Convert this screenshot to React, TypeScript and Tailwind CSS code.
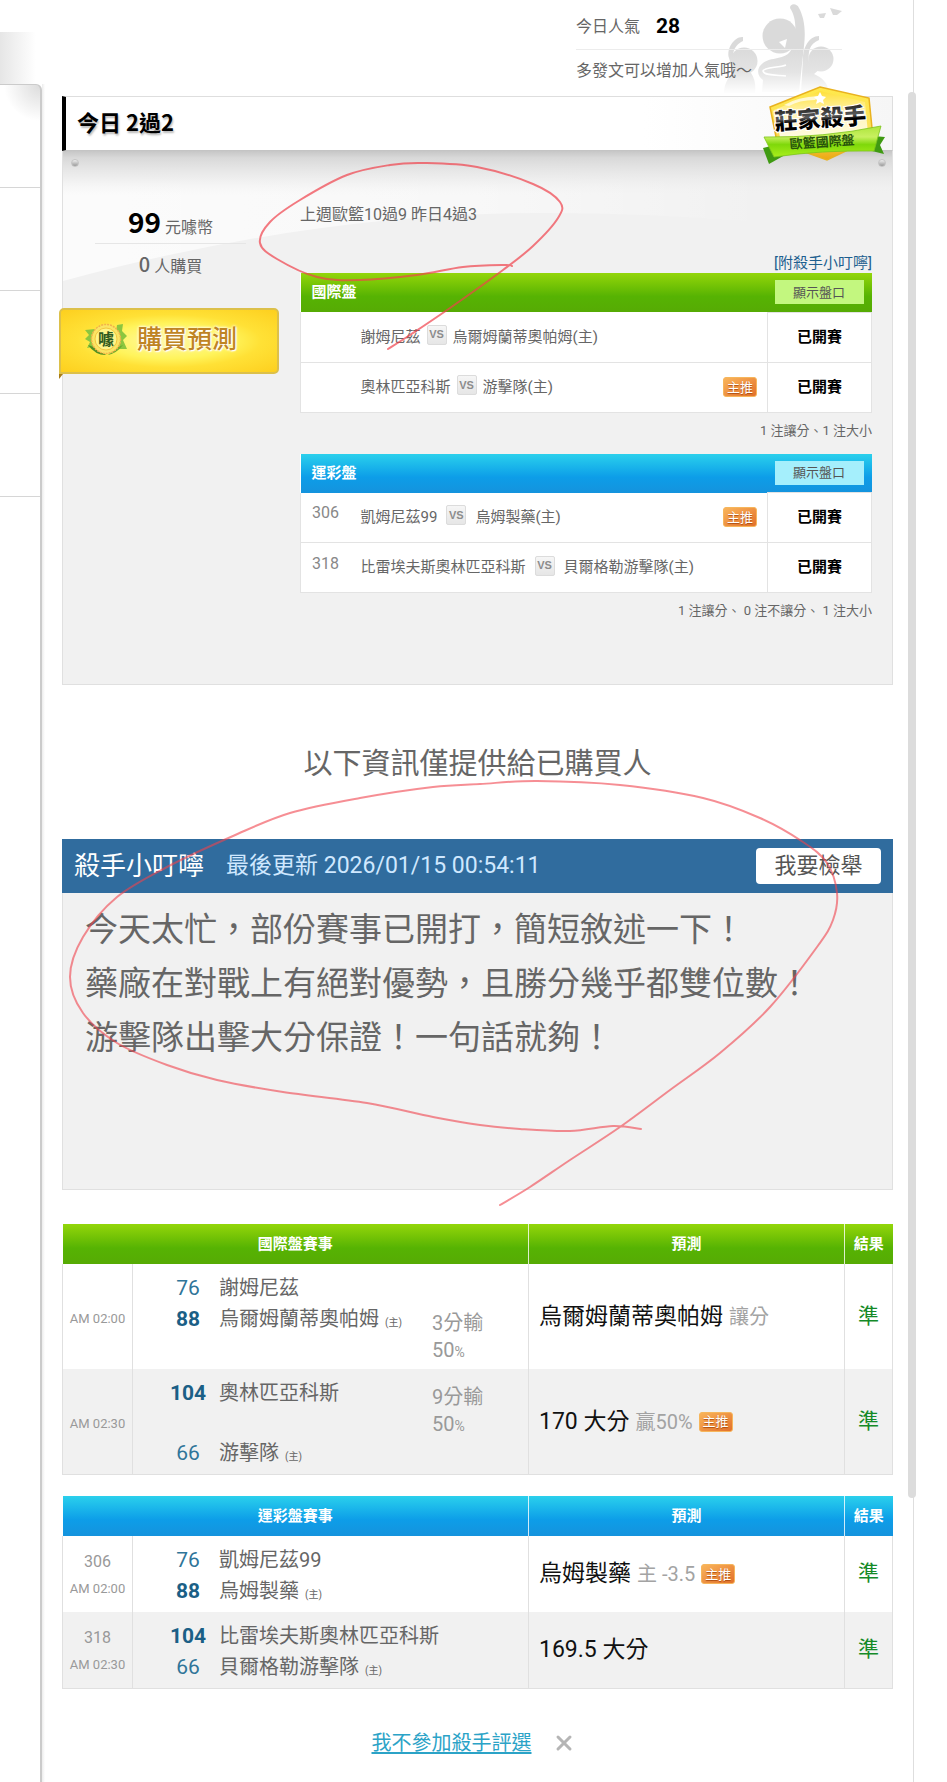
import clsx from "clsx";
import { X } from "lucide-react";

type Tone = "green" | "blue";
type Point = [number, number];

const toneHeader: Record<Tone, string> = {
  green: "bg-linear-to-b from-[#93d60a] via-[#56b303] via-60% to-[#56ab04]",
  blue: "bg-linear-to-b from-[#2bd0ec] via-[#0d9de8] via-60% to-[#1493dd]",
};

const toneButton: Record<Tone, string> = {
  green: "bg-[#c3f77f]",
  blue: "bg-[#a5effc]",
};

const betTables = [
  {
    title: "國際盤",
    tone: "green" as Tone,
    note: "1 注讓分、1 注大小",
    rows: [
      { no: "", away: "謝姆尼茲", home: "烏爾姆蘭蒂奧帕姆(主)", main: false },
      { no: "", away: "奧林匹亞科斯", home: "游擊隊(主)", main: true },
    ],
  },
  {
    title: "運彩盤",
    tone: "blue" as Tone,
    note: "1 注讓分、 0 注不讓分、 1 注大小",
    rows: [
      { no: "306", away: "凱姆尼茲99", home: "烏姆製藥(主)", main: true },
      {
        no: "318",
        away: "比雷埃夫斯奧林匹亞科斯",
        home: "貝爾格勒游擊隊(主)",
        main: false,
      },
    ],
  },
];

const resultTables = [
  {
    title: "國際盤賽事",
    tone: "green" as Tone,
    rows: [
      {
        no: "",
        time: "AM 02:00",
        teams: [
          { score: 76, name: "謝姆尼茲", home: false, win: false, spread: "" },
          { score: 88, name: "烏爾姆蘭蒂奧帕姆", home: true, win: true, spread: "3分輸" },
        ],
        pick: "烏爾姆蘭蒂奧帕姆",
        detail: "讓分",
        main: false,
      },
      {
        no: "",
        time: "AM 02:30",
        teams: [
          { score: 104, name: "奧林匹亞科斯", home: false, win: true, spread: "9分輸" },
          { score: 66, name: "游擊隊", home: true, win: false, spread: "" },
        ],
        pick: "170 大分",
        detail: "贏50%",
        main: true,
      },
    ],
  },
  {
    title: "運彩盤賽事",
    tone: "blue" as Tone,
    rows: [
      {
        no: "306",
        time: "AM 02:00",
        teams: [
          { score: 76, name: "凱姆尼茲99", home: false, win: false, spread: "" },
          { score: 88, name: "烏姆製藥", home: true, win: true, spread: "" },
        ],
        pick: "烏姆製藥",
        detail: "主 -3.5",
        main: true,
      },
      {
        no: "318",
        time: "AM 02:30",
        teams: [
          { score: 104, name: "比雷埃夫斯奧林匹亞科斯", home: false, win: true, spread: "" },
          { score: 66, name: "貝爾格勒游擊隊", home: true, win: false, spread: "" },
        ],
        pick: "169.5 大分",
        detail: "",
        main: false,
      },
    ],
  },
];

const smallLoop: Point[] = [
  [512, 266], [505, 265], [463, 267], [417, 275], [360, 280], [317, 277],
  [277, 259], [260, 243], [270, 222], [300, 200], [347, 175], [390, 165],
  [423, 163], [477, 167], [533, 184], [560, 202], [558, 218], [533, 246],
  [503, 270], [450, 308], [410, 335], [388, 349],
];

const largeLoop: Point[] = [
  [641, 1129], [613, 1126], [570, 1131], [520, 1129], [480, 1125], [433, 1117],
  [367, 1103], [283, 1092], [217, 1080], [167, 1065], [117, 1043], [83, 1013],
  [70, 977], [83, 937], [117, 897], [167, 867], [233, 836], [290, 813],
  [360, 798], [433, 787], [480, 784], [537, 781], [620, 785], [703, 798],
  [760, 818], [803, 842], [827, 863], [837, 893], [833, 920], [817, 947],
  [770, 1007], [720, 1053], [670, 1090], [620, 1127], [570, 1160], [530, 1187],
  [500, 1205],
];

// Catmull-Rom spline through the points
function smoothPath(points: Point[]) {
  let d = `M${points[0][0]} ${points[0][1]}`;
  for (let i = 0; i < points.length - 1; i++) {
    const p0 = points[i - 1] ?? points[i];
    const p1 = points[i];
    const p2 = points[i + 1];
    const p3 = points[i + 2] ?? p2;
    d += ` C${p1[0] + (p2[0] - p0[0]) / 6} ${p1[1] + (p2[1] - p0[1]) / 6}`;
    d += ` ${p2[0] - (p3[0] - p1[0]) / 6} ${p2[1] - (p3[1] - p1[1]) / 6}`;
    d += ` ${p2[0]} ${p2[1]}`;
  }
  return d;
}

function MarkerLoops() {
  return (
    <svg
      className="pointer-events-none absolute left-0 top-0 z-20"
      width="947"
      height="1300"
      fill="none"
      stroke="#f0424c"
      strokeLinecap="round"
      aria-hidden="true"
    >
      <path d={smoothPath(smallLoop)} strokeWidth="2" strokeOpacity="0.7" />
      <path d={smoothPath(largeLoop)} strokeWidth="2" strokeOpacity="0.6" />
    </svg>
  );
}

function MainPick() {
  return (
    <span className="inline-flex h-5 w-[34px] shrink-0 items-center justify-center rounded-[3px] border border-[#f6b65c] bg-linear-to-br from-[#f9b45a] to-[#e2702a] text-[13px] leading-none text-white [text-shadow:0_1px_1px_#a84a10]">
      主推
    </span>
  );
}

function Versus({ wide }: { wide: boolean }) {
  return (
    <span
      className={clsx(
        "mb-1 inline-flex h-5 w-5 items-center justify-center rounded-[2px] border border-[#dcdcdc] bg-linear-to-b from-[#f6f6f6] to-[#e6e6e6] font-['Liberation_Sans'] text-[11px] font-bold leading-none text-[#8c8c8c]",
        wide ? "mx-[9px]" : "mx-1.5"
      )}
    >
      VS
    </span>
  );
}

function Crowd() {
  return (
    <svg
      className="absolute right-[49px] top-0"
      width="124"
      height="96"
      viewBox="720 0 124 96"
      aria-hidden="true"
    >
      <defs>
        <linearGradient id="crowdFade" x1="0" y1="0" x2="0" y2="96" gradientUnits="userSpaceOnUse">
          <stop offset="0.5" stopColor="#dadada" />
          <stop offset="0.75" stopColor="#e4e4e4" />
          <stop offset="0.96" stopColor="#fdfdfd" />
        </linearGradient>
      </defs>
      <g fill="url(#crowdFade)">
        <circle cx="780" cy="36" r="17.5" />
        <path d="M790 8C790 3 797 3 799 8C804 17 806 30 804 46L799 92H762L763 80C757 76 756 68 763 63C770 57 786 60 791 50C796 38 798 20 790 8Z" />
        <circle cx="744" cy="61" r="13.5" />
        <path d="M743 37C735 36 726 48 729 58L733 72C727 78 724 86 724 93H755C756 86 755 79 751 73L735 68C731 58 732 46 743 41Z" />
        <circle cx="821" cy="59" r="12.5" />
        <path d="M819 36C809 36 803 48 803 58L801 93H829C828 82 822 78 814 74L820 69L809 62C808 52 809 44 819 40Z" />
        <path d="M818 14L826 13L824 18L820 18ZM830 8L842 11L837 15L833 15Z" />
      </g>
      <path d="M779 42L787 39L785 48Z" fill="#fff" />
      <path
        d="M786 65C779 68 764 67 763 71C764 76 778 75 786 76"
        fill="none"
        stroke="#fff"
        strokeWidth="1.5"
      />
    </svg>
  );
}

function KillerBadge() {
  return (
    <svg
      className="absolute right-1.5 top-[-12px] z-10"
      width="126"
      height="82"
      viewBox="762 84 126 82"
      role="img"
      aria-label="莊家殺手 歐籃國際盤"
    >
      <defs>
        <linearGradient id="gold" x1="0" y1="0" x2="0" y2="1">
          <stop offset="0" stopColor="#ffe94a" />
          <stop offset="0.6" stopColor="#fbe05c" />
          <stop offset="1" stopColor="#eda712" />
        </linearGradient>
        <linearGradient id="inner" x1="0" y1="0" x2="0" y2="1">
          <stop offset="0" stopColor="#ffe03a" />
          <stop offset="0.5" stopColor="#fff5b8" />
          <stop offset="1" stopColor="#fffbe0" />
        </linearGradient>
        <linearGradient id="ribbon" x1="0" y1="0" x2="0" y2="1">
          <stop offset="0" stopColor="#aee53c" />
          <stop offset="0.35" stopColor="#c8f060" />
          <stop offset="0.6" stopColor="#7fd80a" />
          <stop offset="1" stopColor="#a9ef1c" />
        </linearGradient>
        <linearGradient id="ink" x1="0" y1="0" x2="0" y2="1">
          <stop offset="0" stopColor="#000" />
          <stop offset="0.5" stopColor="#5a5a5a" />
          <stop offset="0.62" stopColor="#000" />
        </linearGradient>
      </defs>
      <path d="M764 148L770 164L786 155L772 146Z" fill="#3f9a12" />
      <path d="M874 136L886 137L881 145L885 154L873 151Z" fill="#3f9a12" />
      <path
        d="M821 87L870 98L874 138L828 160L778 142L771 107Z"
        fill="url(#gold)"
        stroke="#e9b21f"
        strokeWidth="1.5"
      />
      <path d="M821 91L866 102L869 134L781 137L775 110Z" fill="url(#inner)" />
      <path d="M785 105Q798 97 820 96L816 100Q800 100 790 106Z" fill="#fff" fillOpacity="0.7" />
      <path d="M821 92L823 96L827 97L824 100L825 104L821 102L817 104L818 100L815 97L819 96Z" fill="#fff" />
      <path
        d="M765 137Q824 138 882 126L875 151Q822 150 775 157Z"
        fill="url(#ribbon)"
        stroke="#7cc41c"
        strokeWidth="0.8"
      />
      <text
        x="776"
        y="130"
        transform="rotate(-4 776 130)"
        className="font-['Noto_Sans_CJK_TC'] text-[23px] font-black"
        fill="url(#ink)"
        stroke="#fff"
        strokeWidth="2"
        paintOrder="stroke"
      >
        莊家殺手
      </text>
      <text
        x="791"
        y="149"
        transform="rotate(-4 791 149)"
        className="font-['Noto_Sans_CJK_TC'] text-[13px] font-bold"
        fill="#28540b"
      >
        歐籃國際盤
      </text>
    </svg>
  );
}

function CoinLogo() {
  return (
    <svg width="46" height="36" viewBox="0 0 46 36" aria-hidden="true">
      <path d="M2 9L12 8L13 30L9 26L4 27L7 21L2 18L6 14Z" fill="#8cc63f" />
      <path d="M34 4L40 3L39 10L44 15L40 19L44 28L36 28L30 32Z" fill="#8cc63f" />
      <path d="M5 24Q12 34 23 34L16 28Z" fill="#4f8f22" />
      <path d="M40 24Q34 32 25 34L32 27Z" fill="#6cab2e" />
      <circle cx="23" cy="18" r="14.5" fill="#fbe463" stroke="#f3b24a" strokeWidth="1.5" strokeDasharray="2 1" />
      <circle cx="23" cy="18" r="11" fill="#fdf48a" stroke="#f2c63c" />
      <text
        x="15"
        y="24"
        className="font-['Noto_Sans_CJK_TC'] text-[16px] font-bold"
        fill="#2f5a20"
      >
        噱
      </text>
    </svg>
  );
}

function PanelShine() {
  return (
    <svg
      className="absolute inset-x-0 top-0 h-[190px] w-full"
      viewBox="0 0 831 190"
      preserveAspectRatio="none"
      aria-hidden="true"
    >
      <defs>
        <linearGradient id="shine" x1="0" y1="0" x2="1" y2="0">
          <stop offset="0" stopColor="#fff" stopOpacity="0.75" />
          <stop offset="0.5" stopColor="#fff" stopOpacity="0.5" />
          <stop offset="0.85" stopColor="#fff" stopOpacity="0" />
        </linearGradient>
        <linearGradient id="shade" x1="0" y1="0" x2="0" y2="1">
          <stop offset="0" stopColor="#c6c6c6" />
          <stop offset="0.15" stopColor="#d8d8d8" />
          <stop offset="0.6" stopColor="#e8e8e8" stopOpacity="0.7" />
          <stop offset="1" stopColor="#f1f1f1" stopOpacity="0" />
        </linearGradient>
      </defs>
      <path d="M0 0H831V85Q650 62 480 62Q250 62 0 130Z" fill="url(#shine)" />
      <rect width="831" height="44" fill="url(#shade)" />
    </svg>
  );
}

function Screw() {
  return (
    <span className="h-2 w-2 rounded-full border border-[#c4c4c4] bg-linear-to-b from-[#f0f0f0] to-[#9a9a9a]" />
  );
}

function BetTable({ table }: { table: (typeof betTables)[number] }) {
  return (
    <div>
      <table className="w-full border-collapse bg-white text-[15px] text-[#666]">
        <thead>
          <tr className={toneHeader[table.tone]}>
            <th colSpan={2} className="h-[39px] pl-[11px] text-left font-bold text-white">
              {table.title}
            </th>
            <th className="w-[104px] pr-2">
              <button
                type="button"
                className={clsx(
                  "ml-auto block h-6 w-[89px] text-[13px] font-normal text-[#555]",
                  toneButton[table.tone]
                )}
              >
                顯示盤口
              </button>
            </th>
          </tr>
        </thead>
        <tbody>
          {table.rows.map((row) => (
            <tr key={row.away}>
              <td className="h-[50px] w-[60px] border-b border-l border-[#e3e3e3] pb-2 pl-[11px] text-[16px] text-[#888]">
                {row.no}
              </td>
              <td className="border-b border-[#e3e3e3] pr-[10px]">
                <div className="flex items-center justify-between">
                  <span className="flex items-center">
                    {row.away}
                    <Versus wide={row.no !== ""} />
                    {row.home}
                  </span>
                  {row.main && <MainPick />}
                </div>
              </td>
              <td className="border border-[#e3e3e3] text-center font-bold text-black">
                已開賽
              </td>
            </tr>
          ))}
        </tbody>
      </table>
      <div className="pt-2 text-right text-[13px] leading-5 text-[#666]">{table.note}</div>
    </div>
  );
}

function ResultTable({ table }: { table: (typeof resultTables)[number] }) {
  return (
    <table className="w-full table-fixed border-collapse">
      <colgroup>
        <col className="w-[70px]" />
        <col />
        <col className="w-[316px]" />
        <col className="w-12" />
      </colgroup>
      <thead>
        <tr className={clsx("text-[15px] font-bold text-white", toneHeader[table.tone])}>
          <th colSpan={2} className="h-10 border-r border-white/80">
            {table.title}
          </th>
          <th className="border-r border-white/80">預測</th>
          <th>結果</th>
        </tr>
      </thead>
      <tbody>
        {table.rows.map((row) => (
          <tr
            key={row.time}
            className="border-x border-[#e0e0e0] last:border-b even:bg-[#f1f1f1]"
          >
            <td className="border-r border-[#e0e0e0] text-center text-[13px] text-[#999]">
              {row.no && <div className="text-[16px] leading-[26px]">{row.no}</div>}
              <div className="pt-1 leading-5">{row.time}</div>
            </td>
            <td className="border-r border-[#e0e0e0] pb-[5px] pt-[9px]">
              {row.teams.map((team) => (
                <div key={team.name} className="flex items-start text-xl leading-[31px]">
                  <div
                    className={clsx(
                      "ml-[27px] w-14 text-center text-[21px]",
                      team.win ? "font-bold text-[#1b5f86]" : "text-[#2f7599]"
                    )}
                  >
                    {team.score}
                  </div>
                  <div
                    className={clsx(
                      "ml-[3px] whitespace-nowrap text-[#666]",
                      table.tone === "green" && "w-[213px]"
                    )}
                  >
                    {team.name}
                    {team.home && (
                      <span className="ml-1.5 text-[10px] leading-none">(主)</span>
                    )}
                  </div>
                  {team.spread && (
                    <div className="pt-[6px] leading-[27px] text-[#999]">
                      {team.spread}
                      <div>
                        50<span className="text-[14px] leading-none">%</span>
                      </div>
                    </div>
                  )}
                </div>
              ))}
            </td>
            <td className="border-r border-[#e0e0e0] pl-[10px]">
              <div className="flex items-center text-[23px] leading-8 text-[#111]">
                {row.pick}
                <span className="mx-1.5 text-xl text-[#a3a3a3]">{row.detail}</span>
                {row.main && <MainPick />}
              </div>
            </td>
            <td className="text-center text-[21px] text-[#158a28]">準</td>
          </tr>
        ))}
      </tbody>
    </table>
  );
}

function SideStrip() {
  return (
    <aside className="flex w-[45px] shrink-0 flex-col">
      <div className="h-8" />
      <div className="h-[52px] w-9 bg-linear-to-r from-[#e6e6e6] to-white" />
      <div className="flex grow">
        <div className="w-[42px] rounded-tr-md border-r-2 border-t border-[#cbcbcb] bg-[radial-gradient(circle_at_top_right,#dcdcdc,#ffffff_36px)]">
          {[0, 1, 2, 3].map((n) => (
            <div key={n} className="h-[103px] border-b border-[#d6d6d6]" />
          ))}
        </div>
        <div className="w-[3px] bg-linear-to-r from-[#ececec] to-white" />
      </div>
    </aside>
  );
}

export default function App() {
  return (
    <div className="relative flex min-h-screen bg-white font-[Roboto,'Noto_Sans_CJK_TC',sans-serif] text-[#666]">
      <SideStrip />

      <main className="min-w-0 grow border-r border-[#dedede] pb-6 pl-[17px] pr-5">
        <header className="relative">
          <Crowd />
          <div className="relative ml-auto mr-[51px] w-[266px] text-[16px]">
            <div className="flex h-[50px] items-center border-b border-[#ececec] pt-1">
              今日人氣 <b className="ml-4 text-[21px] text-black">28</b>
            </div>
            <div className="flex h-[46px] items-center pb-1">多發文可以增加人氣哦～</div>
          </div>
        </header>

        <section className="relative">
          <KillerBadge />
          <h1 className="flex h-[55px] items-center border border-l-4 border-[#dedede] border-b-[#c4c4c4] border-l-black bg-linear-to-r from-white from-70% to-[#f6f6f6] pb-1 pl-[11px] font-['Noto_Sans_CJK_TC'] text-[22px] font-bold text-black [text-shadow:1px_2px_2px_#bbb]">
            今日 2過2
          </h1>
          <div className="relative border border-t-0 border-[#e0e0e0] bg-[#f1f1f1] pb-[63px]">
            <PanelShine />
            <div className="relative flex h-6 items-center justify-between pl-2 pr-1.5">
              <Screw />
              <Screw />
            </div>
            <div className="relative flex pr-5">
              <div className="w-[215px] shrink-0 pt-6 text-center text-[16px]">
                <div className="mx-8 flex h-[45px] items-baseline justify-center border-b border-[#e6e6e6]">
                  <b className="mr-1 font-['Noto_Sans_CJK_TC'] text-[28px] font-bold leading-[45px] text-black">
                    99
                  </b>
                  元噱幣
                </div>
                <div className="leading-[46px]">
                  <span className="mr-1 font-['Noto_Sans_CJK_TC'] text-xl font-medium">0</span>
                  人購買
                </div>
                <button
                  type="button"
                  className="relative -ml-1 mt-[18px] flex h-[66px] w-[220px] items-center justify-center gap-2 rounded-[5px] rounded-bl-none border-2 border-[#dcc04a] bg-[radial-gradient(ellipse_at_center,#fff9a8_0%,#fff45c_40%,#ffe136_60%,#fdcf1e_100%)] pb-1 pr-[18px]"
                >
                  <CoinLogo />
                  <span className="text-[25px] font-medium leading-none text-[#bf8423] [text-shadow:0_0_3px_#fff,0_0_3px_#fff,1px_1px_1px_#fff]">
                    購買預測
                  </span>
                  <span className="absolute -bottom-[7px] -left-0.5 border-r-4 border-t-[5px] border-r-transparent border-t-[#a87b14] border-l-transparent" />
                </button>
              </div>
              <div className="ml-[22px] min-w-0 grow">
                <p className="pt-7 text-[16px] leading-6">上週歐籃10過9 昨日4過3</p>
                <div className="pt-[26px] text-right text-[15px] leading-5">
                  <a href="#tips" className="text-[#1d5f8f]">
                    [附殺手小叮嚀]
                  </a>
                </div>
                <div className="flex flex-col gap-[13px]">
                  {betTables.map((table) => (
                    <BetTable key={table.title} table={table} />
                  ))}
                </div>
              </div>
            </div>
          </div>
        </section>

        <p className="pb-[53px] pt-[57px] text-center text-[29px] leading-[44px]">
          以下資訊僅提供給已購買人
        </p>

        <section id="tips">
          <div className="flex h-[54px] items-center bg-[#306c9e] px-3">
            <h2 className="text-[26px] text-white">殺手小叮嚀</h2>
            <span className="ml-[22px] text-[23px] text-[#cfe8ff]">
              最後更新 2026/01/15 00:54:11
            </span>
            <button
              type="button"
              className="ml-auto h-9 w-[125px] rounded-[4px] bg-white text-[22px] leading-none text-[#555]"
            >
              我要檢舉
            </button>
          </div>
          <div className="border border-t-0 border-[#e0e0e0] bg-[#f1f1f1] px-[22px] pb-[124px] pt-[10px] text-[33px] leading-[54px]">
            <p>今天太忙，部份賽事已開打，簡短敘述一下！</p>
            <p>藥廠在對戰上有絕對優勢，且勝分幾乎都雙位數！</p>
            <p>游擊隊出擊大分保證！一句話就夠！</p>
          </div>
        </section>

        <div className="mt-[34px] flex flex-col gap-[21px]">
          {resultTables.map((table) => (
            <ResultTable key={table.title} table={table} />
          ))}
        </div>

        <div className="mt-10 flex items-center justify-center gap-5 pr-2">
          <a href="#leave" className="text-[20px] leading-7 text-[#2ba3c7] underline underline-offset-2">
            我不參加殺手評選
          </a>
          <button type="button" aria-label="關閉">
            <X className="h-6 w-6 text-[#b5b5b5]" strokeWidth={3} />
          </button>
        </div>
      </main>

      <div className="w-[33px] shrink-0" />
      <div className="absolute right-[31px] top-[92px] h-[1406px] w-2 rounded-full bg-[#dcdcdc]" />
      <MarkerLoops />
    </div>
  );
}
